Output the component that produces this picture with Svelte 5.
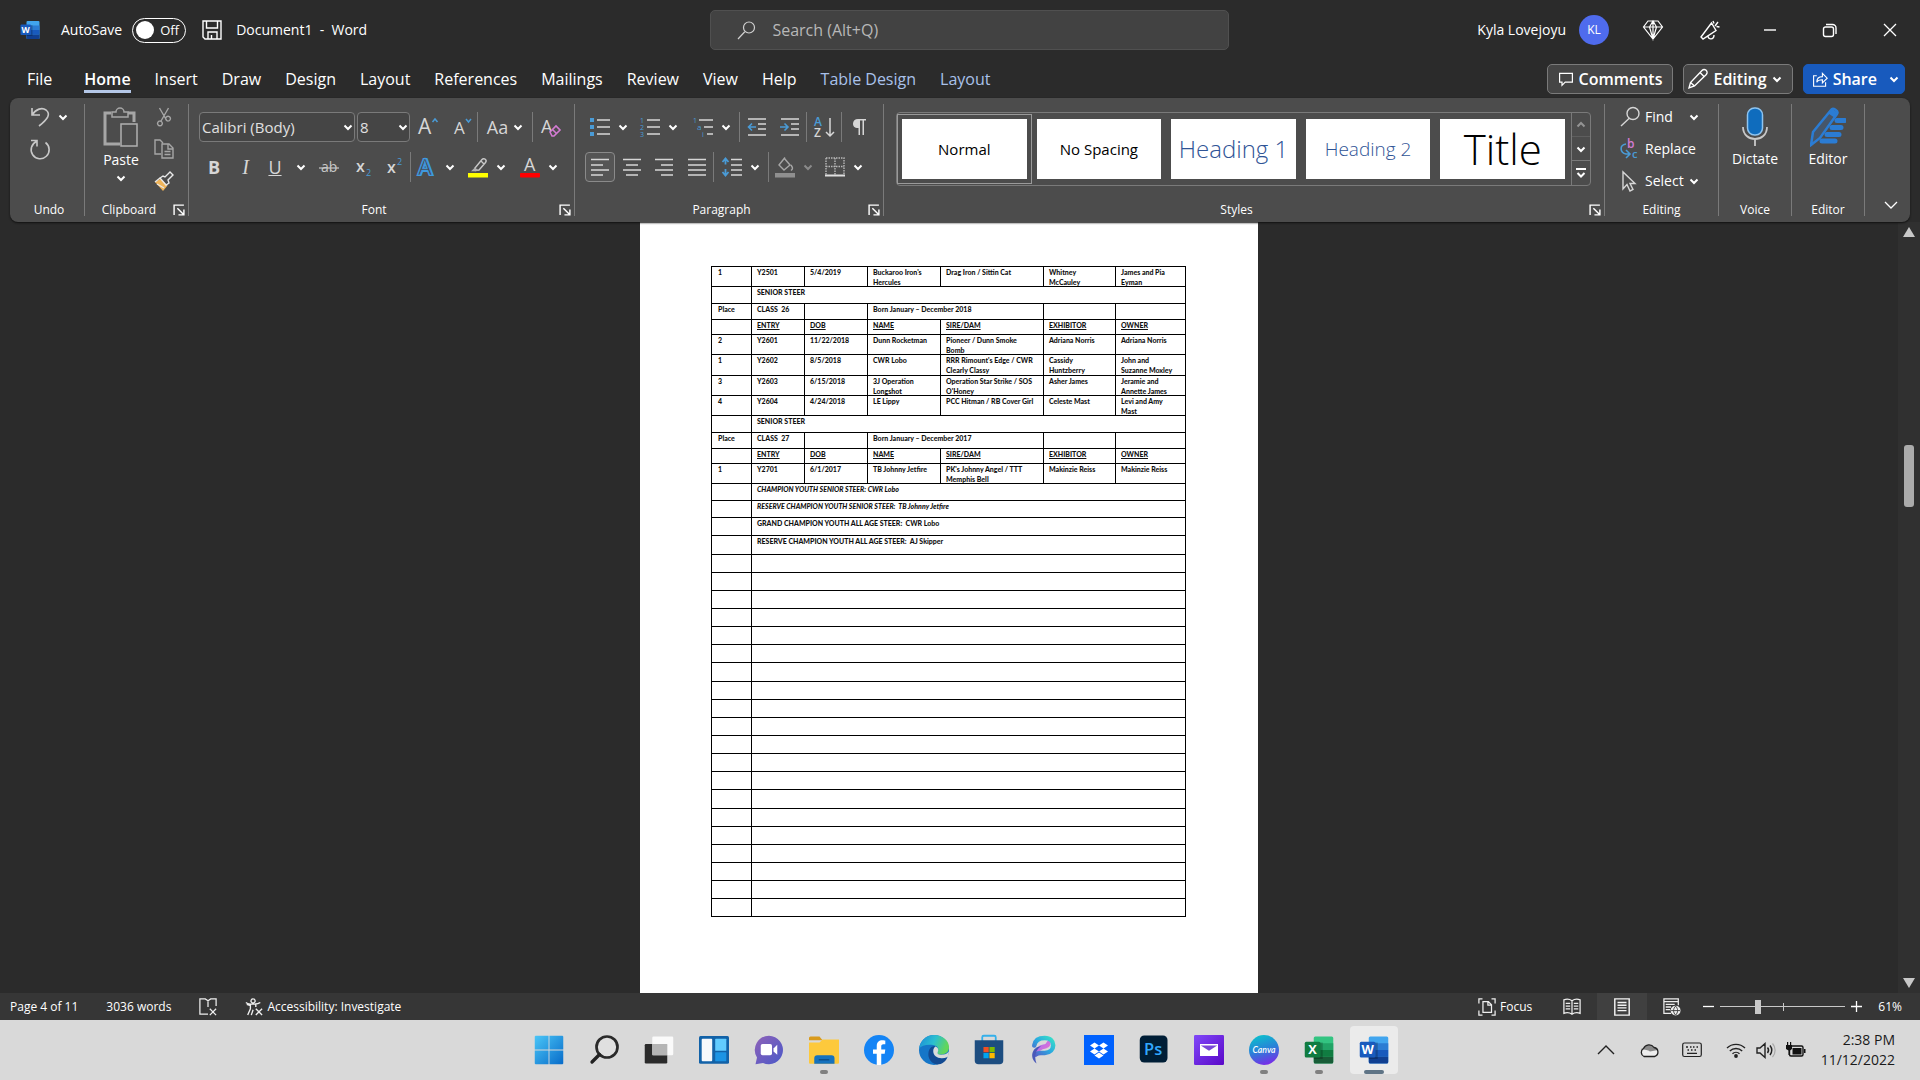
<script>
  const tabs = ['File', 'Home', 'Insert', 'Draw', 'Design', 'Layout', 'References', 'Mailings', 'Review', 'View', 'Help'];
  const contextTabs = ['Table Design', 'Layout'];
  const styles = [
    { name: 'Normal', kind: 'plain-text' },
    { name: 'No Spacing', kind: 'plain-text' },
    { name: 'Heading 1', kind: 'h1' },
    { name: 'Heading 2', kind: 'h2' },
    { name: 'Title', kind: 'title' }
  ];

  const entry = (size, cells) => ({ size, cells: cells.map((text) => ({ text })) });
  const banner = (size, text, look = '') => ({ size, cells: [{ text: '' }, { text, span: 6, look }] });
  const classRow = (name, born) => ({
    size: 'r16',
    cells: [{ text: 'Place' }, { text: name }, { text: '' }, { text: born, span: 2 }, { text: '' }, { text: '' }]
  });
  const heads = {
    size: 'r15',
    cells: ['', 'ENTRY', 'DOB', 'NAME', 'SIRE/DAM', 'EXHIBITOR', 'OWNER'].map((text) => ({ text, look: 'under' }))
  };

  const rows = [
    entry('r20', ['1', 'Y2501', '5/4/2019', "Buckaroo Iron's\nHercules", 'Drag Iron / Sittin Cat', 'Whitney\nMcCauley', 'James and Pia\nEyman']),
    banner('r17', 'SENIOR STEER'),
    classRow('CLASS  26', 'Born January – December 2018'),
    heads,
    entry('r20', ['2', 'Y2601', '11/22/2018', 'Dunn Rocketman', 'Pioneer / Dunn Smoke\nBomb', 'Adriana Norris', 'Adriana Norris']),
    entry('r21', ['1', 'Y2602', '8/5/2018', 'CWR Lobo', "RRR Rimount's Edge / CWR\nClearly Classy", 'Cassidy\nHuntzberry', 'John and\nSuzanne Moxley']),
    entry('r20', ['3', 'Y2603', '6/15/2018', '3J Operation\nLongshot', "Operation Star Strike / SOS\nO'Honey", 'Asher James', 'Jeramie and\nAnnette James']),
    entry('r20', ['4', 'Y2604', '4/24/2018', 'LE Lippy', 'PCC Hitman / RB Cover Girl', 'Celeste Mast', 'Levi and Amy\nMast']),
    banner('r17', 'SENIOR STEER'),
    classRow('CLASS  27', 'Born January – December 2017'),
    heads,
    entry('r20', ['1', 'Y2701', '6/1/2017', 'TB Johnny Jetfire', "PK's Johnny Angel / TTT\nMemphis Bell", 'Makinzie Reiss', 'Makinzie Reiss']),
    banner('r17', 'CHAMPION YOUTH SENIOR STEER: CWR Lobo', 'italic'),
    banner('r17', 'RESERVE CHAMPION YOUTH SENIOR STEER:  TB Johnny Jetfire', 'italic'),
    banner('r18', 'GRAND CHAMPION YOUTH ALL AGE STEER:  CWR Lobo'),
    banner('r19', 'RESERVE CHAMPION YOUTH ALL AGE STEER:  AJ Skipper'),
    ...Array.from({ length: 20 }, (_, i) => banner(i === 6 || i === 13 ? 'r19' : 'r18', ''))
  ];

  let autosave = $state(false);
  let zoom = $state(29);

  const S = (d, c = '#d6d6d6', w = 1.4) => `<path d="${d}" fill="none" stroke="${c}" stroke-width="${w}"/>`;
  const F = (d, c) => `<path d="${d}" fill="${c}"/>`;
  const T = (x, y, s, c, t, extra = '') => `<text x="${x}" y="${y}" font-size="${s}" fill="${c}" font-family="Open Sans, sans-serif" ${extra}>${t}</text>`;
  const B = '#4a9bd6';

  const officeLogo = (letter, c) => `
    <rect x="6.5" y="1" width="13" height="18" rx="1" fill="${c[0]}"/>
    <rect x="6.5" y="5.5" width="13" height="4.5" fill="${c[1]}"/>
    <rect x="6.5" y="10" width="13" height="4.5" fill="${c[2]}"/>
    <path d="M6.500 14.500h13V18a1 1 0 0 1-1 1h-11a1 1 0 0 1-1-1z" fill="${c[3]}"/>
    <path d="M6.500 5h6v11h-6z" fill="#000" opacity=".22"/>
    <rect x="0.500" y="4.500" width="10.500" height="10.500" rx="1" fill="${c[4]}"/>
    <text x="5.700" y="12.800" text-anchor="middle" font-size="8.500" font-weight="700" fill="#fff" font-family="Open Sans, sans-serif">${letter}</text>`;

  const icons = {
    word: officeLogo('W', ['#41a5ee', '#2b7cd3', '#185abd', '#103f91', '#185abd']),
    excel: officeLogo('X', ['#33c481', '#21a366', '#107c41', '#185c37', '#107c41']),
    save: S('M1 1h18v18H3l-2-2zM4.500 1v7h11V1M6 19v-7h9v7M9.500 19v-4', '#fff', 1.4),
    search: S('M12 2a5.500 5.500 0 1 1 0 11a5.500 5.500 0 1 1 0-11M8 11.500L1 19', '#d0d0d0', 1.2),
    diamond: S('M5 1h10l4.500 6L10 19 .5 7zM.5 7h19M6.500 7L10 19l3.500-12L10 1zM10 1v18', '#fff', 1.2),
    megaphone: S('M11.500 3L1 17l2 2 13-8.500zM8 16c0 4 6 4 6-1M13 1l1 2.500M18 2l-3 4M19.500 7l-3-.5', '#fff', 1.4),
    minimize: S('M4 10h12', '#fff', 1.4),
    restore: S('M3.500 9a2 2 0 0 1 2-2h6a2 2 0 0 1 2 2v5.500a2 2 0 0 1-2 2h-6a2 2 0 0 1-2-2zM6 4.500h6.500a3.500 3.500 0 0 1 3.500 3.500v6', '#fff', 1.4),
    close: S('M4 4l12 12M16 4L4 16', '#fff', 1.3),
    comment: S('M2 3h16v11H9l-4 4v-4H2z', '#fff', 1.5),
    pencil: S('M1 19l1.500-5.500L14 1.500a2.500 2.500 0 0 1 4.300 4L6.500 17zM12 3.500l4.500 4.500M2.500 13.500l4 3.500', '#fff', 1.4),
    share: S('M6 6H2v13h15v-5M6 14c0-5 3-7 7-7V3l6 6-6 6v-4c-4 0-6 1-7 3z', '#fff', 1.4),
    undo: S('M2 1v7h8M2 8C6 2 12 0 16 3c5 4 2 9-7 16', '#c8c8c8', 1.6),
    redo: S('M1 1.500h6v6M6.500 2.500a9 9 0 1 0 9 1', '#c8c8c8', 1.6),
    cut: S('M5.500 1L13 14M14.500 1L7 14M6 14a2.400 2.400 0 1 1-.1 0M14 14a2.400 2.400 0 1 1 .1 0', '#a6a6a6', 1.4),
    copy: S('M7 15H1V1h5l3 3M8 5h7l4 4v10H8zM14 5v5h5M10.500 12.500h6M10.500 15.500h6', '#a6a6a6', 1.4),
    brush: F('M1 11l7-4 6 7-5 6z', '#f0b458') + F('M6 7l3-2 8 8-3 2z', '#4c4c4c') + S('M6 7l3-2 2 1 5-5 3 3-5 5 1 3-3 2zM1 11l5-4M3 13l7 4', '#e8e8e8', 1.4),
    clear: T(0, 16, 18, '#d6d6d6', 'A') + '<path d="M9 15l6-6 4 4-6 6h-2z" fill="#4c4c4c" stroke="#d37bd3" stroke-width="1.600"/><path d="M11.500 12.500l4 4" stroke="#d37bd3" stroke-width="1.600"/>',
    grow: T(0, 17, 21, '#d6d6d6', 'A') + S('M14.500 5L17 2l2.500 3', B, 1.5),
    shrink: T(2, 17, 17, '#d6d6d6', 'A') + S('M14 2l2.500 3L19 2', B, 1.5),
    strike: T(2, 15, 14, '#c8c8c8', 'ab') + S('M0 11h20', '#c8c8c8', 1.2),
    sub: T(2, 15, 16, '#d6d6d6', 'x', 'font-weight="600"') + T(12, 19, 9, B, '2'),
    sup: T(2, 16, 16, '#d6d6d6', 'x', 'font-weight="600"') + T(12, 8, 9, B, '2'),
    effects: T(1, 18, 22, '#4c4c4c', 'A', 'stroke="#3f9ae0" stroke-width="2.200" font-weight="600"') + T(1, 18, 22, '#444', 'A', 'stroke="#3f9ae0" stroke-width=".6"'),
    highlight: S('M7 11L14 2.500a2.200 2.200 0 0 1 3.500 3L11 13l-3.500.5zM13 4l3 3', '#c8c8c8', 1.4) + F('M7 10.500l3.500 3-3 .8H3z', '#b0b0b0') + '<rect x="0" y="16" width="20" height="4.500" fill="#ff0"/>',
    fontcolor: T(4, 14, 18, '#d6d6d6', 'A') + '<rect x="0" y="16" width="20" height="4.500" rx="1" fill="#f00"/>',
    bullets: S('M7 3h13M7 10h13M7 17h13', '#d6d6d6', 1.6) + F('M0 1h4v4H0zM0 8h4v4H0zM0 15h4v4H0z', B),
    numbering: S('M7 3h13M7 10h13M7 17h13', '#d6d6d6', 1.6) + T(0, 6, 7, B, '1') + T(0, 13, 7, B, '2') + T(0, 20, 7, B, '3'),
    multilevel: S('M6 3h14M11 10h9M14 17h6', '#d6d6d6', 1.6) + T(0, 6, 7, B, '1') + T(4, 13, 8, B, 'a') + T(9, 20, 7, B, 'i'),
    outdent: S('M1 2h18M11 7h8M11 12h8M1 18h18', '#d6d6d6', 1.6) + S('M9 10H1.500M5 6.500L1.500 10 5 13.500', B, 1.6),
    indent: S('M1 2h18M11 7h8M11 12h8M1 18h18', '#d6d6d6', 1.6) + S('M0 10h8M4.500 6.500L8 10l-3.500 3.500', B, 1.6),
    sort: T(0, 9, 12, B, 'A', 'font-weight="600"') + T(0, 20, 12, '#d6d6d6', 'Z', 'font-weight="600"') + S('M16 1v18M12 15l4 4 4-4', '#d6d6d6', 1.5),
    pilcrow: F('M17 2v1.500h-2V18h-1.500V3.500H11V18H9.500v-7C5 11 4 9 4 6.500S6 2 9 2z', '#d6d6d6'),
    left: S('M1 2.500h18M1 8h12M1 13h18M1 18h12', '#d6d6d6', 1.6),
    center: S('M1 2.500h18M4 8h12M1 13h18M4 18h12', '#d6d6d6', 1.6),
    right: S('M1 2.500h18M7 8h12M1 13h18M7 18h12', '#d6d6d6', 1.6),
    justify: S('M1 2.500h18M1 8h18M1 13h18M1 18h18', '#d6d6d6', 1.6),
    spacing: S('M9 2.500h11M9 8h11M9 13h11M9 18h11', '#d6d6d6', 1.6) + S('M3.500 2v5.500M3.500 12v6M.5 5l3-3.500 3 3.500M.5 15l3 3.500 3-3.500', B, 1.8),
    shading: S('M9 1l6 7-6 5-5-5 6-7.500M16 8c2 3 2 4 0 5.500', '#a6a6a6', 1.4) + '<rect x="0" y="16" width="20" height="4.500" fill="#8f8f8f"/>',
    borders: `<path d="M1 1h18v17M1 1v17M10 1v17M1 9.500h18" fill="none" stroke="#b8b8b8" stroke-width="1.400" stroke-dasharray="1.500 1"/>` + S('M0 18.500h20', '#e0e0e0', 2),
    find: S('M13 .5a6 6 0 1 1 0 12a6 6 0 1 1 0-12M9 11.500L1 19', '#d6d6d6', 1.4),
    replace: T(7, 9, 12, '#d37bd3', 'b', 'font-weight="600"') + T(12, 19, 11, B, 'c', 'font-weight="600"') + S('M6 5C-1 6 0 14 6 15h3M6 11l4 4-4 4', B, 1.6),
    select: S('M3 1v17l4-4.500 3 6.500 3-1.500-3-6h5z', '#d6d6d6', 1.4),
    proof: S('M10 18H1V1h6l3 2 3-2h6v8M10 3v7M12 12l7 7M19 12l-7 7', '#eee', 1.4),
    access: S('M9 1a2.300 2.300 0 1 1-.1 0M1 5c3 2.500 13 2.500 16 0M6 7v5l-3 7M12 7v3M2 7l4 1.500M9 13l-2 6M12 12l7 7M19 12l-7 7', '#eee', 1.5),
    focus: S('M5 1H1v5M15 1h4v5M1 14v5h4M19 14v5h-4M5.500 4h6l3.500 3.500V16H5.500zM11 4v4h4', '#eee', 1.4),
    read: S('M10 3C7 1 4 1 1 2v15c3-1 6-1 9 1 3-2 6-2 9-1V2c-3-1-6-1-9 1zM10 3v15M3 6h5M3 9h5M3 12h5M12 6h5M12 9h5M12 12h5', '#eee', 1.4),
    print: S('M2 1h16v18H2zM5 5h10M5 8h10M5 11h10M5 14h10', '#f4f4f4', 1.6),
    web: S('M9 17H1V1h16v7M1 4h16M3 7h10M3 10h6M3 13h5', '#eee', 1.4) + '<circle cx="14" cy="14" r="5.500" fill="#eee"/><path d="M9 14h10M14 9c-3 3-3 7 0 10M14 9c3 3 3 7 0 10" fill="none" stroke="#363636"/>',
    start: '<defs><linearGradient id="win" gradientUnits="userSpaceOnUse" x1="0" y1="0" x2="20" y2="20"><stop offset="0" stop-color="#4cc8f8"/><stop offset="1" stop-color="#0669c8"/></linearGradient></defs><path d="M1 .5h8.700v9.200H.5V1zM10.300.5h8.700l.5.5v8.700h-9.200zM.5 10.300h9.200v9.200H1l-.5-.5zM10.300 10.300h9.200V19l-.5.500h-8.700z" fill="url(#win)"/>',
    tbsearch: '<circle cx="12" cy="8" r="7" fill="#e8e8e8" fill-opacity=".5" stroke="#2a2a2a" stroke-width="1.800"/><path d="M7 13l-5 5" stroke="#222" stroke-width="2.200" stroke-linecap="round"/>',
    taskview: '<rect x=".5" y="6" width="15" height="13" rx=".8" fill="#2b2b2b"/><rect x="5.500" y="1" width="14" height="12.500" rx=".8" fill="#fff" fill-opacity=".85"/><path d="M5.500 6h10v7.500h-10z" fill="#b5b5b5"/>',
    widgets: '<rect width="20" height="18.500" y=".7" rx="1" fill="#1262a8"/><rect x="1.800" y="2.500" width="7" height="15" rx=".6" fill="#f5f8fb"/><rect x="10.800" y="2.500" width="7.400" height="8" rx=".4" fill="#62ccff"/><rect x="10.800" y="11.500" width="7.400" height="6" rx=".4" fill="#1c94e4"/>',
    chat: '<defs><linearGradient id="ch" x1="0" y1="0" x2="1" y2="1"><stop offset="0" stop-color="#8f62b8"/><stop offset="1" stop-color="#4a58c8"/></linearGradient></defs><path d="M10 .5a9.500 9.500 0 1 1-4 18.200L1 19.500l1-4.500A9.500 9.500 0 0 1 10 .5z" fill="url(#ch)"/><rect x="4.500" y="6" width="7.500" height="7.500" rx="1.200" fill="#fff"/><path d="M13 9l2.500-2.500v6.700L13 11z" fill="#fff"/>',
    folder: '<path d="M0 2a1 1 0 0 1 1-1h6l2 2.500h-9z" fill="#d99a1c"/><path d="M0 5h7l2-2h11v15.500a.7.7 0 0 1-.7.700H.7a.7.7 0 0 1-.7-.7z" fill="#fdc93c"/><path d="M3.500 15.500a2 2 0 0 1 2-2h9.500a2 2 0 0 1 2 2v3.700H3.500z" fill="#1672be"/><path d="M6.500 16.500h7" stroke="#0c4f8c"/>',
    facebook: '<circle cx="10" cy="10" r="10" fill="#1484f5"/><path d="M8.500 20v-7.500H6V9.700h2.500V7.500c0-2.700 1.500-4 3.800-4 1 0 1.900.2 1.900.2v2.500h-1.300c-1.100 0-1.400.7-1.400 1.400v2.100h2.700l-.4 2.800h-2.300V20z" fill="#fff"/>',
    edge: '<defs><linearGradient id="e1" x1="0" y1="0" x2="1" y2=".3"><stop offset="0" stop-color="#1b8ad8"/><stop offset=".55" stop-color="#2bbfd0"/><stop offset="1" stop-color="#62d65a"/></linearGradient></defs><circle cx="10" cy="10" r="10" fill="#1576c8"/><path d="M0 9C1 3.500 5 0 10 0c6 0 10 4 10 8 0 3.500-2.500 5-5.500 5-2.300 0-2.700-1-2-2 .8-1.200.4-3.800-3-4.300C5.500 6 1.500 7 0 9z" fill="url(#e1)"/><path d="M7 9.500c-2 4 0 9.500 5 10.200 3.500 0 6-2.200 7-5-5 2-9.500 0-9.500-4 0-1.500.7-2.500 1.500-3C9.500 7 8 7.700 7 9.500z" fill="#124a92"/><path d="M19 14.700c-5 2-9.500 0-9.500-4 0-1.500.7-2.500 1.500-3 1.800.5 2.300 2.300 1.500 3.600-.5 1 .2 1.900 2 1.900 2.500.1 4.700-.8 5.300-2.200.3 1.200-.2 2.800-.8 3.700z" fill="#dadada"/>',
    store: '<path d="M5.500 4V1.500a1 1 0 0 1 1-1h7a1 1 0 0 1 1 1V4" fill="none" stroke="#35b0ea" stroke-width="1.200"/><path d="M.5 3.500h19V17a2.500 2.500 0 0 1-2.500 2.500H3A2.500 2.500 0 0 1 .5 17z" fill="#1d4d80"/><path d="M6.300 8h3.500v3.500H6.300z" fill="#f25022"/><path d="M10.300 8h3.500v3.500h-3.500z" fill="#7fba00"/><path d="M6.300 12h3.500v3.500H6.300z" fill="#00a4ef"/><path d="M10.300 12h3.500v3.500h-3.500z" fill="#ffb900"/>',
    picsart: '<defs><linearGradient id="pa" x1="0" y1="1" x2="1" y2="0"><stop offset="0" stop-color="#5660c8"/><stop offset=".5" stop-color="#2aa8e0"/><stop offset="1" stop-color="#37e0c8"/></linearGradient><linearGradient id="pb" x1="0" y1="0" x2="1" y2="1"><stop offset="0" stop-color="#a070f0"/><stop offset="1" stop-color="#f070d0"/></linearGradient></defs><path d="M5 13c0-4 3-5 6-5.500 2-.5 2.500-2 1-3" fill="none" stroke="url(#pb)" stroke-width="3"/><path d="M3.500 7C4 3.500 7 2 10.500 2c7.500 0 7.500 9.500 0 10-3 .200-4-.5-6 1" fill="none" stroke="url(#pa)" stroke-width="3" stroke-linecap="round"/><path d="M5 19c-5-4-3-11 3-11.500-3 2-5 6-3 11.500z" fill="#4a58b8"/>',
    dropbox: '<rect width="20" height="20" fill="#0061fe"/><path d="M7 5l3 2-3 2-3-2zM13 5l3 2-3 2-3-2zM7 9l3 2-3 2-3-2zM13 9l3 2-3 2-3-2zM10 11.600l3 2-3 2-3-2z" fill="#fff"/>',
    photoshop: '<rect x=".5" y=".3" width="18.500" height="18" rx="3" fill="#001e36"/>' + T(3.4, 13.2, 11, '#31a8ff', 'Ps', 'font-weight="600"'),
    mail: '<defs><linearGradient id="ml" x1="0" y1="0" x2="1" y2="1"><stop offset="0" stop-color="#8048f8"/><stop offset="1" stop-color="#5a08c8"/></linearGradient></defs><rect width="20" height="20" rx=".8" fill="url(#ml)"/><path d="M4 6h12v8H4z" fill="#fff"/><path d="M4.500 7h11L10 10.500z" fill="#7a48d8"/>',
    canva: '<defs><linearGradient id="cv" x1=".3" y1="0" x2=".6" y2="1"><stop offset="0" stop-color="#0cc0cc"/><stop offset=".5" stop-color="#2a80d8"/><stop offset="1" stop-color="#7a2ae8"/></linearGradient></defs><circle cx="10" cy="10" r="10" fill="url(#cv)"/><text x="10" y="12" text-anchor="middle" font-size="5.800" font-style="italic" font-weight="600" font-family="Lato, sans-serif" fill="#fff">Canva</text>',
    up: S('M2 14l8-8 8 8', '#222', 1.4),
    cloud: '<path d="M5 16.500a4.500 4.500 0 0 1-.5-8A6 6 0 0 1 15 7.500a4.600 4.600 0 0 1 .5 9z" fill="#eee"/><path d="M2 9.500C3 8 4 8.300 4.500 8.500A6 6 0 0 1 15 7.500c1.500 0 3 .5 4 2.500l-8 1.500C9 10 6 9.500 2 9.500z" fill="#8a8a8a"/><path d="M5 16.500a4.500 4.500 0 0 1-.5-8A6 6 0 0 1 15 7.500a4.600 4.600 0 0 1 .5 9z" fill="none" stroke="#222" stroke-width="1.300"/>',
    keyboard: '<rect x=".7" y="3" width="18.600" height="13.500" rx="1.800" fill="none" stroke="#222" stroke-width="1.200"/><path d="M4 7h2M8 7h1.500M11 7h1.500M14.500 7h1.500M5.500 10h1.500M9 10h1.500M12.500 10h1.500M5 13.300h10" stroke="#222" stroke-width="1.300"/>',
    wifi: S('M1 8a13 13 0 0 1 18 0M3.800 11a9 9 0 0 1 12.400 0M6.500 13.800a5 5 0 0 1 7 0', '#222', 1.4) + '<circle cx="10" cy="16" r="1.900" fill="#222"/>',
    volume: S('M1 8v5h3l5 4.500V3.500L4 8zM11.500 7.500c1.200 1.500 1.200 4 0 5.500M14 5.500c2.300 3 2.300 6.500 0 9.500', '#222', 1.4) + S('M16.500 3.500c3.500 4 3.500 9.500 0 13.500', '#aaa', 1.2),
    battery: '<rect x="3.500" y="6" width="13.500" height="10" rx="1.500" fill="none" stroke="#111" stroke-width="1.400"/><path d="M6.500 8h9v6.500h-9z" fill="#111"/><path d="M18 9h1.500v4H18zM0 5h6v4L4 10.500V15H2.500v-4.500L0 9zM1 2h1.200v3H1zM4 2h1.200v3H4z" fill="#111"/>'
  };

  const apps = [
    ['start', 'Start'], ['tbsearch', 'Search'], ['taskview', 'Task view'], ['widgets', 'Widgets'],
    ['chat', 'Chat'], ['folder', 'File Explorer', 'open'], ['facebook', 'Facebook'], ['edge', 'Edge'],
    ['store', 'Store'], ['picsart', 'Picsart'], ['dropbox', 'Dropbox'], ['photoshop', 'Photoshop'],
    ['mail', 'Mail'], ['canva', 'Canva', 'open'], ['excel', 'Excel', 'open'], ['word', 'Word', 'current']
  ];
  const tray = [
    ['up', 'Hidden icons', 'solo'], ['cloud', 'OneDrive', 'solo'], ['keyboard', 'Touch keyboard', 'solo last'],
    ['wifi', 'Network'], ['volume', 'Volume'], ['battery', 'Battery']
  ];
</script>

{#snippet icon(name, size = '')}
  <svg class="ic {size}" viewBox="0 0 20 20" aria-hidden="true">{@html icons[name]}</svg>
{/snippet}

{#snippet chev()}
  <svg class="chev" viewBox="0 0 10 10" aria-hidden="true"><path d="M1.500 3.500L5 7l3.500-3.500" /></svg>
{/snippet}

{#snippet tool(name, label, split = false)}
  <button class="tool {name}" class:split aria-label={label}>
    {@render icon(name)}
    {#if split}{@render chev()}{/if}
  </button>
{/snippet}

{#snippet foot(label, launcher = false)}
  <div class="foot">
    <span>{label}</span>
    {#if launcher}
      <button class="launcher" aria-label="{label} settings">
        <svg viewBox="0 0 11 11"><path d="M1 10V1h9M4 4l5.500 5.500M10 5v5H5" /></svg>
      </button>
    {/if}
  </div>
{/snippet}

<div class="app">
  <header class="titlebar">
    <div class="title-left">
      {@render icon('word', 'logo')}
      <label class="autosave">
        <span>AutoSave</span>
        <span class="switch">
          <input type="checkbox" role="switch" bind:checked={autosave} />
          <span class="knob"></span>
          <span>Off</span>
        </span>
      </label>
      <button class="plain save" aria-label="Save">{@render icon('save')}</button>
      <span class="docname">Document1&nbsp; -&nbsp; Word</span>
    </div>
    <label class="search">
      {@render icon('search')}
      <input type="text" placeholder="Search (Alt+Q)" aria-label="Search" />
    </label>
    <div class="title-right">
      <span>Kyla Lovejoyu</span>
      <button class="avatar" aria-label="Account">KL</button>
      <button class="plain win gem" aria-label="Premium">{@render icon('diamond')}</button>
      <button class="plain win" aria-label="Coming soon">{@render icon('megaphone')}</button>
      <button class="plain win" aria-label="Minimize">{@render icon('minimize')}</button>
      <button class="plain win" aria-label="Restore">{@render icon('restore')}</button>
      <button class="plain win" aria-label="Close">{@render icon('close')}</button>
    </div>
  </header>

  <nav class="tabs">
    {#each tabs as t}
      <button class="tab" class:active={t === 'Home'}>{t}</button>
    {/each}
    {#each contextTabs as t}
      <button class="tab context">{t}</button>
    {/each}
    <div class="actions">
      <button class="action comments">{@render icon('comment', 'small')}Comments</button>
      <button class="action editing">{@render icon('pencil')}Editing{@render chev()}</button>
      <button class="action share">{@render icon('share', 'small')}Share{@render chev()}</button>
    </div>
  </nav>

  <section class="ribbon" aria-label="Ribbon">
    <div class="group undo-group">
      <div class="body">
        {@render tool('undo', 'Undo', true)}
        {@render tool('redo', 'Redo')}
      </div>
      {@render foot('Undo')}
    </div>

    <div class="group clipboard">
      <div class="body">
        <button class="big">
          <svg class="paste" viewBox="0 0 36 40" aria-hidden="true">
            <path d="M8 6H2v31h15M25 6h6v9" fill="none" stroke="#a6a6a6" stroke-width="3" />
            <path d="M9 10V5h4a4 4 0 0 1 8 0h4v5z" fill="#4c4c4c" stroke="#a6a6a6" stroke-width="1.500" />
            <path d="M18 17h16v22H18z" fill="#4c4c4c" stroke="#b0b0b0" stroke-width="1.500" />
          </svg>
          Paste
          {@render chev()}
        </button>
        <div class="stack">
          {@render tool('cut', 'Cut')}
          {@render tool('copy', 'Copy')}
          {@render tool('brush', 'Format Painter')}
        </div>
      </div>
      {@render foot('Clipboard', true)}
    </div>

    <div class="group font">
      <div class="body rows">
        <div class="row font-a">
          <div class="pick">
            <select aria-label="Font"><option>Calibri (Body)</option></select>{@render chev()}
          </div>
          <div class="pick">
            <select aria-label="Font size"><option>8</option></select>{@render chev()}
          </div>
          {@render tool('grow', 'Grow font')}
          {@render tool('shrink', 'Shrink font')}
          <i class="bar"></i>
          <button class="tool split letters case">Aa{@render chev()}</button>
          <i class="bar"></i>
          {@render tool('clear', 'Clear formatting')}
        </div>
        <div class="row font-b">
          <button class="tool letters bold">B</button>
          <button class="tool letters ital">I</button>
          <button class="tool split letters underline"><u>U</u>{@render chev()}</button>
          {@render tool('strike', 'Strikethrough')}
          {@render tool('sub', 'Subscript')}
          {@render tool('sup', 'Superscript')}
          <i class="bar"></i>
          {@render tool('effects', 'Text effects', true)}
          {@render tool('highlight', 'Highlight', true)}
          {@render tool('fontcolor', 'Font color', true)}
        </div>
      </div>
      {@render foot('Font', true)}
    </div>

    <div class="group paragraph">
      <div class="body rows">
        <div class="row para-a">
          {@render tool('bullets', 'Bullets', true)}
          {@render tool('numbering', 'Numbering', true)}
          {@render tool('multilevel', 'Multilevel list', true)}
          <i class="bar"></i>
          {@render tool('outdent', 'Decrease indent')}
          {@render tool('indent', 'Increase indent')}
          <i class="bar"></i>
          {@render tool('sort', 'Sort')}
          <i class="bar"></i>
          {@render tool('pilcrow', 'Show marks')}
        </div>
        <div class="row para-b">
          <button class="tool pressed" aria-label="Align left">{@render icon('left')}</button>
          {@render tool('center', 'Center')}
          {@render tool('right', 'Align right')}
          {@render tool('justify', 'Justify')}
          <i class="bar"></i>
          {@render tool('spacing', 'Line spacing', true)}
          <i class="bar"></i>
          {@render tool('shading', 'Shading', true)}
          {@render tool('borders', 'Borders', true)}
        </div>
      </div>
      {@render foot('Paragraph', true)}
    </div>

    <div class="group styles">
      <div class="body">
        <div class="gallery">
          <div class="tiles">
            {#each styles as s, i}
              <button class="tile {s.kind}" class:chosen={i === 0}><span>{s.name}</span></button>
            {/each}
          </div>
          <div class="steps">
            <button aria-label="Previous styles" class="off"><svg class="chev" viewBox="0 0 10 10"><path d="M1.500 6.500L5 3l3.500 3.500" /></svg></button>
            <button aria-label="Next styles">{@render chev()}</button>
            <button aria-label="More styles"><svg class="chev" viewBox="0 0 10 10"><path d="M0 1h10M1.500 5L5 8.500 8.500 5" /></svg></button>
          </div>
        </div>
      </div>
      {@render foot('Styles', true)}
    </div>

    <div class="group editgroup">
      <div class="body">
        <button class="line find-line">{@render icon('find')}Find{@render chev()}</button>
        <button class="line">{@render icon('replace')}Replace</button>
        <button class="line select-line">{@render icon('select')}Select{@render chev()}</button>
      </div>
      {@render foot('Editing')}
    </div>

    <div class="group single">
      <div class="body">
        <button class="big">
          <svg class="paste" viewBox="0 0 36 40" aria-hidden="true">
            <rect x="10.500" y="1" width="15" height="27" rx="7" fill="#0f6cbd" stroke="#8ec4f0" stroke-width="1.500" />
            <path d="M6 20c0 16 24 16 24 0M18 32v7" fill="none" stroke="#c8c8c8" stroke-width="1.800" />
          </svg>
          Dictate
        </button>
      </div>
      {@render foot('Voice')}
    </div>

    <div class="group single">
      <div class="body">
        <button class="big">
          <svg class="paste" viewBox="0 0 36 40" aria-hidden="true">
            <path d="M27 13.500h8M22 20.500h9M17 27.500h12M12 34h13" stroke="#2b7cd3" stroke-width="5" stroke-linecap="round" />
            <path d="M1 38l2-13L21 3c2-3 8 1 6 4L10 31z" fill="#46566a" stroke="#2b7cd3" stroke-width="2.500" />
            <path d="M20 4l6 4" stroke="#2b7cd3" stroke-width="6" />
          </svg>
          Editor
        </button>
      </div>
      {@render foot('Editor')}
    </div>

    <button class="collapse" aria-label="Collapse ribbon"><svg viewBox="0 0 14 14"><path d="M1 4l6 6 6-6" /></svg></button>
  </section>

  <main class="workspace">
    <div class="canvas">
      <article class="page">
        <table>
          <colgroup>
            <col class="c-place" /><col class="c-entry" /><col class="c-dob" /><col class="c-name" />
            <col class="c-sire" /><col class="c-exh" /><col class="c-owner" />
          </colgroup>
          <tbody>
            {#each rows as row}
              <tr class={row.size}>
                {#each row.cells as cell}
                  <td colspan={cell.span ?? 1} class={cell.look}><div>{cell.text}</div></td>
                {/each}
              </tr>
            {/each}
          </tbody>
        </table>
      </article>
    </div>
    <div class="scroll">
      <button class="arrow" aria-label="Scroll up"><svg viewBox="0 0 12 10"><path d="M6 0l6 10H0z" /></svg></button>
      <div class="track"><div class="thumb"></div></div>
      <button class="arrow" aria-label="Scroll down"><svg viewBox="0 0 12 10"><path d="M6 10L0 0h12z" /></svg></button>
    </div>
  </main>

  <footer class="status">
    <button class="stat">Page 4 of 11</button>
    <button class="stat">3036 words</button>
    <button class="stat" aria-label="Proofing">{@render icon('proof', 'small')}</button>
    <button class="stat">{@render icon('access', 'small')}Accessibility: Investigate</button>
    <div class="status-right">
      <button class="stat">{@render icon('focus', 'small')}Focus</button>
      <button class="view" aria-label="Read mode">{@render icon('read', 'small')}</button>
      <button class="view on" aria-label="Print layout">{@render icon('print', 'small')}</button>
      <button class="view" aria-label="Web layout">{@render icon('web', 'small')}</button>
      <button class="step" aria-label="Zoom out"><svg viewBox="0 0 11 11"><path d="M0 5.500h11" /></svg></button>
      <div class="slider"><input type="range" min="0" max="100" bind:value={zoom} aria-label="Zoom" /></div>
      <button class="step" aria-label="Zoom in"><svg viewBox="0 0 11 11"><path d="M0 5.500h11M5.500 0v11" /></svg></button>
      <button class="stat percent">61%</button>
    </div>
  </footer>

  <footer class="taskbar">
    <div></div>
    <div class="apps">
      {#each apps as [name, label, state]}
        <button class="app-btn {state ?? ''}" aria-label={label}>{@render icon(name, 'large')}</button>
      {/each}
    </div>
    <div class="tray">
      {#each tray as [name, label, kind]}
        <button class="tray-btn {kind ?? ''}" aria-label={label}>{@render icon(name)}</button>
      {/each}
      <button class="clock"><span>2:38 PM</span><span>11/12/2022</span></button>
    </div>
  </footer>
</div>

<style>
  :global(body) { margin: 0; background: #2b2b2b; }
  .app {
    display: flex; flex-direction: column; height: 100vh; min-height: 1080px;
    background: #2b2b2b; color: #fff; font: 15px/20px 'Open Sans', 'Noto Sans', sans-serif;
  }
  button { font: inherit; color: inherit; background: none; border: 0; padding: 0; margin: 0; }
  .ic { display: block; flex: none; width: 20px; height: 20px; overflow: visible; }
  .ic.small { width: 18px; height: 18px; }
  .ic.large { width: 30px; height: 30px; }
  .chev { display: block; flex: none; width: 10px; height: 10px; fill: none; stroke: #fff; stroke-width: 2; }

  .titlebar { display: grid; grid-template-columns: 37% 27% 1fr; align-items: center; height: 60px; flex: none; }
  .title-left { display: flex; align-items: center; padding-left: 20px; font-size: 14px; }
  .autosave { display: flex; align-items: center; gap: 10px; margin-left: 21px; }
  .switch {
    position: relative; display: flex; align-items: center; gap: 6px; box-sizing: border-box; width: 54px; height: 25px;
    padding-left: 3px; border: 1px solid #fff; border-radius: 13px; font-size: 13px;
  }
  .switch input { position: absolute; inset: 0; margin: 0; opacity: 0; }
  .knob { width: 18px; height: 18px; border-radius: 50%; background: #fff; }
  .save { margin: 0 14px 0 16px; }
  .search {
    display: flex; align-items: center; gap: 13px; height: 40px; padding-left: 26px; box-sizing: border-box;
    background: #424242; border: 1px solid #505050; border-radius: 5px;
  }
  .search input { flex: 1; min-width: 0; border: 0; outline: 0; background: none; color: #fff; font: inherit; font-size: 16px; }
  .search input::placeholder { color: #b8b8b8; opacity: 1; }
  .title-right { display: flex; align-items: center; justify-content: flex-end; }
  .title-right > span { font-size: 14px; margin-right: 13px; }
  .avatar { width: 30px; height: 30px; border-radius: 50%; background: #4f6bed; font-size: 12px; margin-right: 17px; }
  .win { width: 60px; display: grid; place-items: center; }
  .win.gem { width: 54px; }

  .tabs { display: flex; align-items: center; gap: 24px; height: 38px; flex: none; padding: 0 15px 0 27px; font-size: 16px; white-space: nowrap; }
  .tab { height: 28px; border-bottom: 3px solid transparent; line-height: 22px; padding-top: 3px; }
  .tab:first-child { margin-right: 8px; }
  .tab.active { font-weight: 600; border-color: #b4c7e7; }
  .tab.context { color: #a9c1ea; }
  .actions { display: flex; gap: 10px; margin-left: auto; }
  .action {
    display: flex; align-items: center; gap: 5px; height: 30px; padding: 0 10px; box-sizing: border-box;
    background: #454545; border: 1px solid #7a7a7a; border-radius: 5px; font-weight: 600; font-size: 16px;
  }
  .action .ic.small { width: 16px; height: 16px; }
  .action.editing { padding: 0 10px 0 4px; }
  .action.share { background: #185abd; border-color: #185abd; padding: 0 5px 0 8px; }
  .action.share .chev { margin-left: 7px; }

  .ribbon {
    display: flex; flex: none; height: 124px; margin: 0 10px; padding-top: 6px; box-sizing: border-box;
    background: #4c4c4c; border-radius: 8px; position: relative; z-index: 1; box-shadow: 0 1px 2px #111;
  }
  .group { display: flex; flex-direction: column; height: 112px; border-right: 1px solid #7a7a7a; box-sizing: border-box; flex: none; }
  .body { flex: 1; display: flex; min-height: 0; }
  .foot { display: flex; align-items: center; height: 12px; font-size: 12px; line-height: 12px; flex: none; }
  .foot span { flex: 1; text-align: center; line-height: 16px; }
  .launcher { flex: none; margin-right: 3px; width: 12px; height: 12px; display: grid; }
  .launcher svg { width: 12px; height: 12px; }
  .launcher svg, .collapse svg, .step svg { fill: none; stroke: #fff; stroke-width: 1.3; }
  .undo-group { width: 75px; padding-left: 4px; }
  .undo-group .body { flex-direction: column; align-items: flex-start; gap: 12px; padding: 3px 0 0 16px; }
  .clipboard { width: 104px; }
  .clipboard .body { padding-left: 15px; }
  .big { display: flex; flex-direction: column; align-items: center; width: 42px; gap: 3px; padding-top: 3px; height: 84px; font-size: 14px; }
  .paste { width: 36px; height: 40px; flex: none; }
  .stack { display: flex; flex-direction: column; gap: 12px; padding: 3px 0 0 12px; }
  .font { width: 386px; }
  .paragraph { width: 309px; }
  .rows { flex-direction: column; gap: 10px; padding: 8px 0 0 10px; }
  .row { display: grid; height: 30px; justify-content: start; }
  .font-a { grid-template-columns: 158px 53px 36px 31px 1px 54px 1px 35px; }
  .font-b { grid-template-columns: 30px 33px 48px 38px 31px 31px 1px 49px 52px 52px; }
  .para-a { grid-template-columns: 48px 51px 55px 1px 34px 32px 1px 34px 1px 34px; }
  .para-b { grid-template-columns: 30px 33px 32px 33px 1px 54px 1px 49px 52px; }
  .bar { background: #7a7a7a; }
  .tool { display: flex; align-items: center; justify-content: center; }
  .tool.split { gap: 8px; }
  .tool.case { gap: 5px; }
  .tool.underline { gap: 14px; padding-left: 2px; }
  .tool.highlight, .tool.fontcolor { padding-left: 2px; }
  .shading .chev { opacity: .35; }
  .pressed { border: 1px solid #8a8a8a; border-radius: 4px; background: #555; }
  .letters { font-size: 18px; color: #d6d6d6; }
  .letters.bold { font-weight: 700; }
  .letters.ital { font: italic 20px/24px 'Liberation Serif', serif; }
  .pick { position: relative; display: grid; margin-right: 2px; }
  .pick:nth-child(2) { margin-right: 0; }
  .pick select {
    appearance: none; width: 100%; height: 30px; padding: 0 18px 0 2px; color: #e0e0e0; background: #454545;
    border: 1px solid #7a7a7a; border-radius: 4px; font: inherit; font-size: 15px;
  }
  .pick .chev { position: absolute; right: 2px; top: 10px; pointer-events: none; }
  .styles { flex: 1; min-width: 300px; }
  .styles .body { padding: 8px 13px 0 12px; }
  .gallery { display: flex; flex: 1; min-width: 0; height: 74px; box-sizing: border-box; border: 1px solid #7a7a7a; border-radius: 4px; }
  .tiles { display: grid; grid-template-columns: repeat(5, 1fr); flex: 1; padding: 1px 1px 1px 0; }
  .tile { display: grid; padding: 4px; border: 1px solid transparent; }
  .tile.chosen { border-color: #9a9a9a; }
  .tile span { display: grid; place-items: center; background: #fff; color: #000; font-size: 15px; overflow: hidden; white-space: nowrap; }
  .tile.h1 span { font-size: 24px; font-weight: 300; color: #2f5496; }
  .tile.h2 span { font-size: 19px; font-weight: 300; color: #2f5496; }
  .tile.title span { font-size: 42px; font-weight: 300; }
  .steps { display: grid; grid-template-rows: repeat(3, 1fr); width: 18px; border-left: 1px solid #7a7a7a; }
  .steps button { display: grid; place-items: center; border-bottom: 1px solid #7a7a7a; }
  .steps button:last-child { border-bottom: 0; }
  .steps .off { opacity: .4; }
  .editgroup { width: 114px; }
  .editgroup .body { flex-direction: column; gap: 12px; padding: 3px 0 0 15px; }
  .line { display: flex; align-items: center; gap: 5px; font-size: 14px; height: 20px; }
  .find-line .chev { margin-left: 11px; }
  .select-line { gap: 5px; }
  .single { width: 73px; align-items: stretch; }
  .single .body { justify-content: center; }
  .single .big { width: 60px; gap: 2px; }
  .collapse { align-self: flex-end; margin: 0 12px 10px 19px; width: 14px; height: 14px; display: grid; }
  .collapse svg { width: 14px; height: 14px; }

  .workspace { flex: 1; min-height: 0; display: flex; overflow: hidden; }
  .canvas { flex: 1; display: flex; justify-content: center; }
  .page { width: 618px; background: #fff; color: #111; padding: 44px 71px 0; box-sizing: border-box; }
  table { border-collapse: collapse; table-layout: fixed; width: 475px; font: 900 7px/10px Lato, 'Open Sans', sans-serif; }
  td { border: 1px solid #000; padding: 0; vertical-align: top; }
  td div { white-space: pre; padding: 0 0 0 5px; box-sizing: border-box; }
  td:first-child div { padding-left: 6px; }
  .c-place { width: 40px; }
  .c-entry { width: 53px; }
  .c-dob { width: 63px; }
  .c-name { width: 73px; }
  .c-sire { width: 103px; }
  .c-exh { width: 72px; }
  .c-owner { width: 70px; }
  .r15 div { height: 14px; }
  .r16 div { height: 15px; }
  .r17 div { height: 16px; }
  .r18 div { height: 17px; }
  .r19 div { height: 18px; }
  .r20 div { height: 19px; }
  .r21 div { height: 20px; }
  .under { text-decoration: underline; }
  .italic { font-style: italic; }
  .scroll { width: 22px; display: flex; flex-direction: column; align-items: center; padding: 5px 0; box-sizing: border-box; background: #303030; }
  .arrow { height: 10px; display: grid; }
  .arrow svg { width: 12px; height: 10px; fill: #c8c8c8; }
  .track { flex: 1; padding-top: 208px; }
  .thumb { width: 10px; height: 62px; border-radius: 3px; background: #ababab; }

  .status { display: flex; align-items: stretch; height: 27px; flex: none; background: #363636; font-size: 12px; padding: 0 18px 0 10px; gap: 28px; }
  .stat { display: flex; align-items: center; gap: 4px; white-space: nowrap; }
  .status-right { display: flex; margin-left: auto; align-items: stretch; }
  .view { width: 50px; display: grid; place-items: center; }
  .view:nth-child(2) { margin-left: 15px; }
  .view.on { background: #404040; }
  .step { width: 11px; display: grid; place-items: center; margin: 0 6px; }
  .step svg { width: 11px; height: 11px; }
  .slider { position: relative; display: flex; align-items: center; width: 125px; }
  .slider::after { content: ''; position: absolute; left: 50%; top: 10px; width: 1px; height: 8px; background: #c8c8c8; }
  .slider input { appearance: none; width: 100%; margin: 0; height: 1px; background: #c8c8c8; }
  .slider input::-webkit-slider-thumb { appearance: none; width: 6px; height: 14px; background: #c8c8c8; }
  .percent { margin-left: 10px; }

  .taskbar { display: grid; grid-template-columns: 1fr auto 1fr; align-items: center; height: 60px; flex: none; background: #d9d9d9; color: #1a1a1a; }
  .apps { display: flex; gap: 7px; padding-left: 2px; }
  .app-btn { position: relative; display: grid; place-items: center; width: 48px; height: 48px; border-radius: 4px; }
  .current { background: #ebebeb; }
  .open::after, .current::after { content: ''; position: absolute; left: 20px; bottom: 0; width: 8px; height: 4px; border-radius: 2px; background: #808080; }
  .current::after { left: 14px; width: 20px; background: #5f7486; }
  .tray { display: flex; justify-content: flex-end; align-items: center; padding-right: 25px; }
  .tray-btn { width: 30px; display: grid; place-items: center; }
  .tray-btn.solo { width: 43px; }
  .tray-btn.last { margin-right: 8px; }
  .clock { display: flex; flex-direction: column; align-items: flex-end; width: 84px; font-size: 14px; }
</style>
